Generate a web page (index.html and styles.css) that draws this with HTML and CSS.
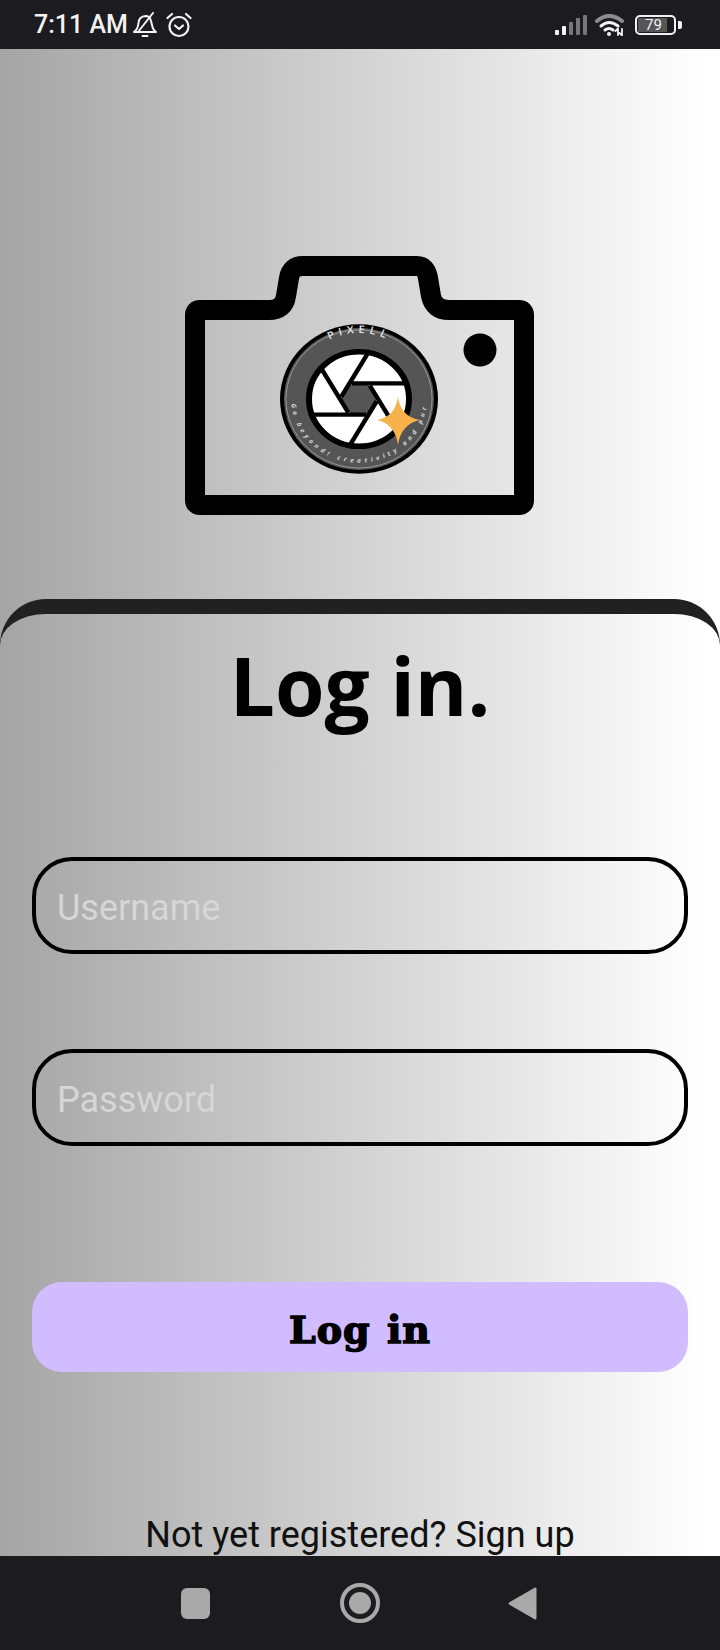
FILE: index.html
```html
<!DOCTYPE html>
<html lang="en">
<head>
    <meta charset="UTF-8">
    <meta name="viewport" content="width=device-width, initial-scale=1.0">
    <title>Log in</title>
    <link rel="stylesheet" href="styles.css">
</head>
<body>
    <div class="status-bar">
        <div class="status-left">
            <span class="hora">7:11 AM</span>
            <svg class="icon-bell" width="24" height="26" viewBox="0 0 24 26" fill="none" stroke="#f2f2f2" stroke-width="2" stroke-linejoin="round" stroke-linecap="round">
                <path d="M1 20 Q5 17 5.500 11 Q6 4.500 12.500 4 Q17 4 18 9 L19.500 15 Q20 18 23 20 Z"/>
                <path d="M5 20 L20 1"/>
                <path d="M9.500 24 H14.500"/>
            </svg>
            <svg class="icon-alarm" width="26" height="26" viewBox="0 0 26 26" fill="none" stroke="#f2f2f2" stroke-width="2.200" stroke-linecap="round" stroke-linejoin="round">
                <circle cx="13" cy="14.500" r="9.500"/>
                <path d="M1.500 6 L6 2"/>
                <path d="M24.500 6 L20 2"/>
                <path d="M9 13.500 L13 17 L17 13.500"/>
            </svg>
        </div>
        <div class="status-right">
            <svg width="32" height="20" viewBox="0 0 32 20">
                <rect x="0" y="15" width="4" height="5" rx="1" fill="#f2f2f2"/>
                <rect x="7" y="11" width="4" height="9" rx="1" fill="#f2f2f2"/>
                <rect x="14" y="7" width="4" height="13" rx="1" fill="#77777a"/>
                <rect x="21" y="3" width="4" height="17" rx="1" fill="#77777a"/>
                <rect x="28" y="0" width="4" height="20" rx="1" fill="#77777a"/>
            </svg>
            <svg class="icon-wifi" width="30" height="22" viewBox="0 0 30 22" fill="none" stroke-linecap="round">
                <path d="M2 7 Q14 -3 27 7" stroke="#8c8c8e" stroke-width="4"/>
                <path d="M6 12 Q14 5 23 12" stroke="#f2f2f2" stroke-width="3"/>
                <path d="M10 16 Q14 13 18 16" stroke="#f2f2f2" stroke-width="3"/>
                <circle cx="14" cy="20" r="2" fill="#f2f2f2"/>
                <path d="M23 21 V15 M20.500 17 L23 14.500 M27 15 V21 M24.500 19 L27 21.500" stroke="#f2f2f2" stroke-width="1.800"/>
            </svg>
            <div class="bateria">
                <div class="bateria-nivel">79</div>
            </div>
            <div class="bateria-punta"></div>
        </div>
    </div>

    <div class="pantalla">
        <div class="cabecera">
            <svg width="350" height="260" viewBox="0 0 350 260">
                <path d="M10 59 Q10 54 15 54 H84 Q99 54 101 40 L104 22 Q106 10 118 10 H232 Q241 10 243 22 L246 40 Q249 54 264 54 H334 Q339 54 339 59 V244 Q339 249 334 249 H15 Q10 249 10 244 Z" fill="none" stroke="#000" stroke-width="20" stroke-linejoin="round"/>
                <circle cx="295" cy="94" r="16.500" fill="#000"/>
                <g transform="translate(174 143) scale(1 .945)">
                    <circle r="79" fill="#000"/>
                    <circle r="75" fill="#555"/>
                    <circle r="73" fill="none" stroke="#aaa" stroke-width=".8"/>
                    <circle r="49" fill="#fff"/>
                    <polygon points="18,0 9,-15.600 -9,-15.600 -18,0 -9,15.600 9,15.600" fill="#555"/>
                    <g stroke="#000" stroke-width="4.500">
                        <line x1="-7" y1="-16.500" x2="50" y2="-16.500"/>
                        <line x1="-7" y1="-16.500" x2="50" y2="-16.500" transform="rotate(60)"/>
                        <line x1="-7" y1="-16.500" x2="50" y2="-16.500" transform="rotate(120)"/>
                        <line x1="-7" y1="-16.500" x2="50" y2="-16.500" transform="rotate(180)"/>
                        <line x1="-7" y1="-16.500" x2="50" y2="-16.500" transform="rotate(240)"/>
                        <line x1="-7" y1="-16.500" x2="50" y2="-16.500" transform="rotate(300)"/>
                    </g>
                    <circle r="50" fill="none" stroke="#000" stroke-width="6"/>
                    <path id="arco-arriba" d="M-62 -8 A62 62 0 0 1 62 -8" fill="none"/>
                    <path id="arco-abajo" d="M-66 -17 A68 68 0 1 0 66 -17" fill="none"/>
                    <text class="logo-titulo" text-anchor="middle"><textPath href="#arco-arriba" startOffset="50%">PIXELL</textPath></text>
                    <text class="logo-lema" text-anchor="middle"><textPath href="#arco-abajo" startOffset="50%">Go beyond! creativity and pur</textPath></text>
                </g>
                <path d="M213 141 Q216 161 235 164 Q216 168 213 189 Q210 168 192 164 Q210 161 213 141 Z" fill="#f7b24c"/>
            </svg>
        </div>

        <div class="tarjeta">
            <h1>Log in.</h1>
            <input class="campo campo-usuario" type="text" placeholder="Username">
            <input class="campo campo-clave" type="password" placeholder="Password">
            <button class="boton">Log in</button>
            <div class="registro">Not yet registered? Sign up</div>
        </div>
    </div>

    <div class="nav-bar">
        <svg width="29" height="31" viewBox="0 0 29 31"><rect width="29" height="31" rx="6" fill="#a9a9a9"/></svg>
        <svg class="nav-home" width="40" height="40" viewBox="0 0 40 40">
            <circle cx="20" cy="20" r="18" fill="none" stroke="#a9a9a9" stroke-width="4"/>
            <circle cx="20" cy="20" r="11" fill="#a9a9a9"/>
        </svg>
        <svg width="29" height="35" viewBox="0 0 29 35"><path d="M27 1.500 Q28.500 1 28.500 3 V32 Q28.500 34 27 33.500 L1 18.500 Q0 17.500 1 16.500 Z" fill="#a9a9a9"/></svg>
    </div>
</body>
</html>
```

FILE: styles.css
```css
body {
    margin: 0;
    height: 1650px;
    display: flex;
    flex-direction: column;
    font-family: Roboto, sans-serif;
    background-color: #1c1b20;
}
.status-bar {
    height: 49px;
    flex-shrink: 0;
    display: flex;
    justify-content: space-between;
    align-items: center;
    padding: 0 38px 0 34px;
    background-color: #1c1b20;
    color: #f2f2f2;
}
.status-left, .status-right {
    display: flex;
    align-items: center;
}
.hora {
    font-size: 25px;
    font-weight: 500;
    margin-right: 5px;
}
.icon-bell {
    margin-right: 9px;
}
.status-right svg {
    margin-right: 8px;
}
.status-right .icon-wifi {
    margin-right: 10px;
}
.bateria {
    width: 35px;
    height: 14px;
    padding: 1px;
    border: 2px solid #f2f2f2;
    border-radius: 5px;
    box-sizing: content-box;
}
.bateria-nivel {
    width: 27px;
    height: 14px;
    padding-left: 2px;
    background-color: #55555a;
    font-size: 15px;
    line-height: 14px;
    text-align: center;
}
.bateria-punta {
    width: 4px;
    height: 8px;
    margin-left: 2px;
    background-color: #f2f2f2;
    border-radius: 0 2px 2px 0;
}
.pantalla {
    flex: 1;
    min-height: 0;
    overflow: hidden;
    display: flex;
    flex-direction: column;
    background: linear-gradient(to right, #a5a5a5, #fff 98%);
}
.cabecera {
    height: 550px;
    flex-shrink: 0;
    padding: 207px 0 0 185px;
    box-sizing: border-box;
}
.cabecera svg {
    display: block;
}
.logo-titulo {
    font-family: "Open Sans", sans-serif;
    font-size: 11px;
    font-weight: 600;
    letter-spacing: 4.500px;
    fill: #e6e6e6;
}
.logo-lema {
    font-family: "Open Sans", sans-serif;
    font-size: 6.500px;
    font-weight: 700;
    font-style: italic;
    letter-spacing: 3.800px;
    fill: #d8d8d8;
}
.tarjeta {
    flex: 1;
    display: flex;
    flex-direction: column;
    padding: 0 32px;
    border-top: 15px solid #212121;
    border-radius: 46px 46px 0 0;
}
h1 {
    margin: 16px 0 0;
    height: 110px;
    font-family: "Open Sans", sans-serif;
    font-size: 80px;
    font-weight: 700;
    line-height: 110px;
    text-align: center;
    color: #000;
}
.campo {
    display: block;
    height: 97px;
    padding: 4px 21px 0;
    box-sizing: border-box;
    border: 4px solid #000;
    border-radius: 40px;
    background: transparent;
    font-family: Roboto, sans-serif;
    font-size: 36px;
    outline: none;
}
.campo::placeholder {
    color: #d6d6d6;
    opacity: 1;
}
.campo-usuario {
    margin-top: 117px;
}
.campo-clave {
    margin-top: 95px;
}
.boton {
    height: 90px;
    margin-top: 136px;
    padding-top: 6px;
    border: 0;
    border-radius: 30px;
    background-color: #d0bcff;
    font-family: "DejaVu Serif", serif;
    font-size: 38px;
    font-weight: 700;
    letter-spacing: 1px;
    word-spacing: 2px;
    -webkit-text-stroke: 1.500px #000;
    color: #000;
}
.registro {
    margin-top: 142px;
    font-size: 36px;
    line-height: 42px;
    text-align: center;
    color: #111;
}
.nav-bar {
    height: 94px;
    flex-shrink: 0;
    display: flex;
    justify-content: space-between;
    align-items: center;
    padding: 0 183px 0 181px;
    background-color: #1c1b20;
}
.nav-home {
    margin-left: 2px;
}
```
